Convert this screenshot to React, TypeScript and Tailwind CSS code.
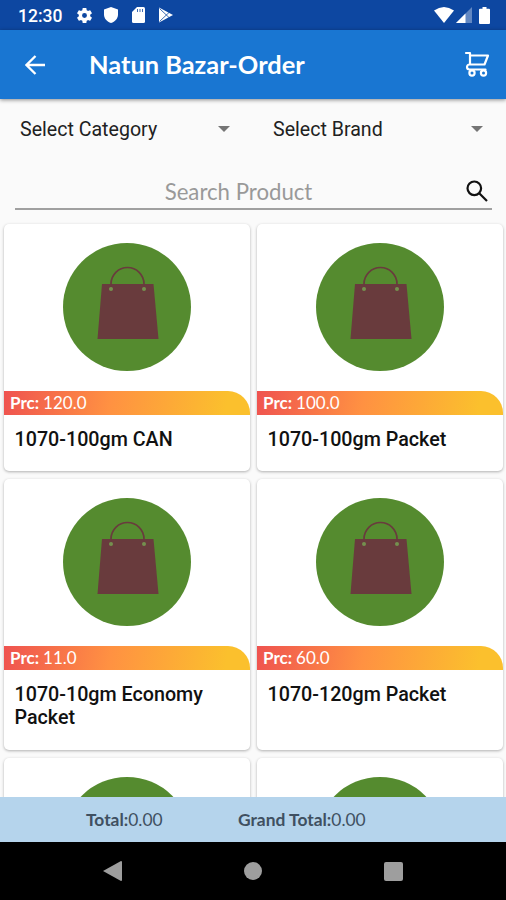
import React from "react";

type Product = { name: string; price: string };

const rows: { height: string; items: Product[] }[] = [
  {
    height: "h-[247px]",
    items: [
      { name: "1070-100gm CAN", price: "120.0" },
      { name: "1070-100gm Packet", price: "100.0" },
    ],
  },
  {
    height: "h-[271px]",
    items: [
      { name: "1070-10gm Economy Packet", price: "11.0" },
      { name: "1070-120gm Packet", price: "60.0" },
    ],
  },
];

function StatusBar() {
  return (
    <div className="flex h-[30px] shrink-0 items-center bg-[#0d47a1] pl-[18px] pr-[16px] text-white">
      <span className="w-[57px] pt-[2px] font-['Roboto',sans-serif] text-[17.5px] leading-[30px] font-medium">12:30</span>
      <svg className="size-[19px]" viewBox="0 0 24 24" fill="currentColor">
        <path d="M19.14 12.94c.04-.3.06-.61.06-.94s-.02-.64-.07-.94l2.03-1.58a.49.49 0 0 0 .12-.61l-1.92-3.32a.49.49 0 0 0-.59-.22l-2.39.96a7 7 0 0 0-1.62-.94l-.36-2.54a.48.48 0 0 0-.48-.41h-3.84a.47.47 0 0 0-.47.41l-.36 2.54c-.59.24-1.13.57-1.62.94l-2.39-.96a.48.48 0 0 0-.59.22L2.74 8.87a.48.48 0 0 0 .12.61l2.03 1.58a6 6 0 0 0 0 1.88l-2.03 1.58a.49.49 0 0 0-.12.61l1.92 3.32c.12.22.37.29.59.22l2.39-.96c.5.38 1.03.7 1.62.94l.36 2.54c.05.24.24.41.48.41h3.84c.24 0 .44-.17.47-.41l.36-2.54a7 7 0 0 0 1.62-.94l2.39.96c.22.08.47 0 .59-.22l1.92-3.32a.48.48 0 0 0-.12-.61zM12 15.1a3.1 3.1 0 1 1 0-6.2 3.1 3.1 0 0 1 0 6.2z" />
      </svg>
      <svg className="ml-[10px] h-[16px] w-[14px]" viewBox="0 0 14 16" fill="currentColor">
        <path d="M7 0 14 2.5v5c0 4-3 7.300-7 8.500C3 14.800 0 11.500 0 7.500v-5z" />
      </svg>
      <svg className="ml-[14px] h-[16px] w-[13px]" viewBox="0 0 13 16">
        <path d="M5 0h6.500Q13 0 13 1.500v13q0 1.500-1.500 1.500h-10Q0 16 0 14.500V5z" fill="currentColor" />
        <path d="M5.500 2v3M8 2v3M10.500 2v3" stroke="#0d47a1" strokeWidth="1" opacity=".8" />
      </svg>
      <svg className="ml-[13px] h-[16px] w-[16px]" viewBox="0 0 16 16">
        <path d="M1 .5 15 8 1 15.500z" fill="currentColor" />
        <path d="M1.500 1.500 11 10.500M1.500 14.500 11 5.500" stroke="#0d47a1" strokeWidth=".8" fill="none" />
      </svg>
      <svg className="ml-auto h-[16px] w-[20px]" viewBox="0 0 20 16" fill="currentColor">
        <path d="M0 3.500Q10-3.500 20 3.500L10 16z" />
      </svg>
      <svg className="ml-[2px] h-[16px] w-[16px]" viewBox="0 0 16 16" fill="currentColor">
        <path d="M0 16 16 0v16z" opacity=".35" />
        <path d="M0 16 9.500 6.500V16z" />
      </svg>
      <svg className="ml-[7px] h-[17px] w-[11px]" viewBox="0 0 11 17" fill="currentColor">
        <path d="M3.500 0h4v1.700H10q1 0 1 1V16q0 1-1 1H1q-1 0-1-1V2.700q0-1 1-1h2.500z" />
      </svg>
    </div>
  );
}

function AppBar() {
  return (
    <header className="relative z-10 flex h-[69px] shrink-0 items-center bg-[#1976d2] pr-[16px] pl-[25px] text-white shadow-[0_1px_4px_rgba(0,0,0,0.45)]">
      <svg className="h-[20px] w-[20px]" viewBox="0 0 20 20" fill="none" stroke="currentColor" strokeWidth="2.300">
        <path d="M20 10H2M10.500 1 1.500 10l9 9" />
      </svg>
      <h1 className="ml-[44px] pb-[2px] font-['Lato',sans-serif] text-[25.4px] leading-[30px] font-bold whitespace-nowrap">Natun Bazar-Order</h1>
      <svg className="mb-[2px] ml-auto h-[26px] w-[26px]" viewBox="0 0 26 26" fill="none" stroke="currentColor" strokeWidth="2.200" strokeLinejoin="round" strokeLinecap="round">
        <path d="M2 2H6v11.500M6 4.500h18L20.500 13.500H5.500a2.500 2.500 0 0 0 0 5H21.500" />
        <circle cx="8" cy="22" r="2.600" fill="#1976d2" />
        <circle cx="19.500" cy="22" r="2.600" fill="#1976d2" />
      </svg>
    </header>
  );
}

function Dropdown({ label }: { label: string }) {
  return (
    <div className="flex flex-1 items-center justify-between pr-[23px] pl-[20px]">
      <span className="pt-[2px] font-['Roboto',sans-serif] text-[19.6px] leading-[24px] text-[#212121]">{label}</span>
      <svg className="h-[6px] w-[12px]" viewBox="0 0 12 6" fill="#757575">
        <path d="M0 0h12L6 6z" />
      </svg>
    </div>
  );
}

function BagIcon() {
  return (
    <svg className="h-[128px] w-[128px] shrink-0" viewBox="0 0 128 128">
      <circle cx="64" cy="64" r="64" fill="#558b2f" />
      <path d="M39 41h51.500L95.500 96H34.500z" fill="#693b3d" />
      <path d="M48 45V41a16.500 16.500 0 0 1 33 0V45" fill="none" stroke="#693b3d" strokeWidth="1.700" />
      <circle cx="48" cy="46" r="2" fill="#74904f" />
      <circle cx="81" cy="46" r="2" fill="#74904f" />
    </svg>
  );
}

function ProductCard({ product }: { product?: Product }) {
  return (
    <article className="flex w-[246px] shrink-0 flex-col items-center overflow-hidden rounded-[5px] bg-white pt-[19px] shadow-[0_1px_3px_rgba(0,0,0,0.3)]">
      <BagIcon />
      {product && (
        <>
          <div className="mt-[19.500px] flex h-[24px] w-full shrink-0 items-center rounded-tr-[22px] bg-[linear-gradient(100deg,#ef5350_0%,#ff9142_43%,#fbc02d_90%)] pl-[6px] font-['Lato',sans-serif] text-[17px] text-white">
            <b className="font-bold">Prc:</b>
            <span className="ml-[4px]">{product.price}</span>
          </div>
          <p className="mt-[13.500px] w-full pr-[30px] pl-[10.500px] font-['Roboto',sans-serif] text-[19.700px] leading-[23px] font-medium text-[#111]">{product.name}</p>
        </>
      )}
    </article>
  );
}

export default function App() {
  return (
    <div className="flex h-[900px] w-[506px] flex-col overflow-hidden bg-[#fafafa]">
      <StatusBar />
      <AppBar />
      <div className="flex h-[60px] shrink-0">
        <Dropdown label="Select Category" />
        <Dropdown label="Select Brand" />
      </div>
      <div className="mr-[14px] ml-[15px] flex h-[51px] shrink-0 items-center border-b-2 border-[#a0a0a0] pt-[14px]">
        <span className="flex-1 pt-[2px] pr-[4px] text-center font-['Lato',sans-serif] text-[22.200px] leading-[26px] text-[#999]">Search Product</span>
        <svg className="mr-[4px] h-[22px] w-[22px]" viewBox="0 0 22 22" fill="none" stroke="#111" strokeWidth="2.200">
          <circle cx="8.300" cy="8.300" r="6.800" />
          <path d="m13.500 13.500 7.500 7.500" />
        </svg>
      </div>
      <main className="flex min-h-0 flex-1 flex-col gap-[8px] overflow-hidden px-[4px] pt-[14px]">
        {rows.map((row, i) => (
          <div key={i} className={`flex shrink-0 gap-[7px] ${row.height}`}>
            {row.items.map((p) => (
              <ProductCard key={p.name} product={p} />
            ))}
          </div>
        ))}
        <div className="flex h-[247px] shrink-0 gap-[7px]">
          <ProductCard />
          <ProductCard />
        </div>
      </main>
      <footer className="flex h-[45px] shrink-0 items-center bg-[#b5d4ec] pt-[2px] pl-[86px] font-['Lato',sans-serif] text-[17.400px] text-[#3f5061]">
        <div className="w-[152px]"><b>Total:</b>0.00</div>
        <div><b>Grand Total:</b>0.00</div>
      </footer>
      <nav className="flex h-[58px] shrink-0 items-center bg-black pl-[103px] text-[#9e9e9e]">
        <svg className="h-[20px] w-[19px]" viewBox="0 0 19 20" fill="currentColor">
          <path d="M0 10 18 0q1 0 1 1v18q0 1-1 1z" />
        </svg>
        <div className="ml-[122px] size-[18px] rounded-full bg-[#9e9e9e]" />
        <div className="ml-[122px] size-[19px] rounded-[2px] bg-[#9e9e9e]" />
      </nav>
    </div>
  );
}
